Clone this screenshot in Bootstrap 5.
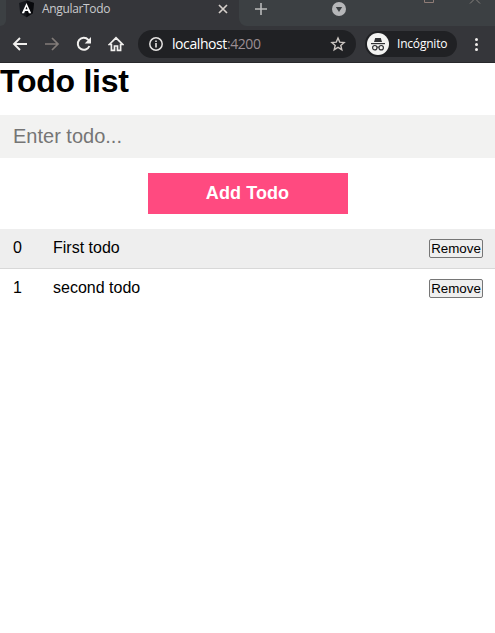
<!DOCTYPE html>
<html lang="en">
<head>
<meta charset="utf-8">
<meta name="viewport" content="width=device-width, initial-scale=1">
<title>AngularTodo</title>
<link href="https://cdn.jsdelivr.net/npm/bootstrap@5.3.0/dist/css/bootstrap.min.css" rel="stylesheet">
<style>
body{font-family:"Liberation Sans",Arial,sans-serif;color:#000;line-height:1.15;overflow:hidden}
svg{display:block;flex:none}
.browser{height:63px;background:#35363a;border-bottom:1px solid #28282b;font-family:"Open Sans","Noto Sans",sans-serif}
.tabstrip{height:26px;background:#3c4043}
.prev-tab{width:6px;background:#35363a;flex:none}
.prev-tab span{display:block;width:6px;height:26px;background:#3c4043;border-bottom-right-radius:8px}
.active-tab{width:233px;background:#35363a;padding-left:12px;padding-right:10px;height:26px;padding-bottom:8px}
.tab-title{font-size:12px;letter-spacing:-.34px;color:#c9cacd;margin-left:7px;line-height:18px}
.strip-rest{background:#35363a}
.strip-inner{height:26px;background:#3c4043;border-bottom-left-radius:8px;padding-left:16px;padding-bottom:8px}
.drop{margin-left:65px}
.win-max{margin-left:78px;align-self:flex-start}
.win-close{margin-left:35px;align-self:flex-start}
.toolbar{height:36px}
.nav-icons{width:138px;padding-left:12px;gap:16px}
.omnibox{width:218px;height:28px;background:#202124;border-radius:14px;padding-left:10px;padding-right:10px;margin-right:9px}
.url{font-size:14px;letter-spacing:-.42px;color:#fff;margin-left:8px;line-height:28px}
.url span{color:#9b8e92}
.incog{width:92px;height:26px;background:#202124;border-radius:13px;padding-left:2px;margin-right:12px}
.incog-label{font-size:12px;color:#fff;margin-left:8px;letter-spacing:-.2px;line-height:26px}
.page-title{font-size:32px;font-weight:700;line-height:37px;margin-bottom:15px;letter-spacing:-.25px}
.todo-input{height:43px;border:0;border-radius:0;background:#f2f2f1;padding:0 13px;font-size:20px;color:#000}
.todo-input::placeholder{color:#757575;opacity:1}
.add-btn{width:200px;height:41px;margin:15px auto;background:#ff4a80;border:0;border-radius:0;color:#fff;font-weight:700;font-size:18px;letter-spacing:.1px;padding:0;line-height:41px}
.add-btn:hover{background:#ff4a80;color:#fff}
.todo-row{height:40px;border:0;border-radius:0!important;padding:0 12px 2px 13px;font-size:16px;color:#000;background:#fff}
.todo-row.shade{background:#eee;border-bottom:1px solid #d8d8d8;padding-bottom:1px}
.idx{width:40px}
.remove-btn{width:54px;height:19px;font-size:13.333px;line-height:17px;padding:0;border:1px solid #767676;border-radius:2px;background:#efefef;color:#000}
</style>
</head>
<body class="bg-white">
<header class="browser">
  <div class="tabstrip d-flex">
    <div class="prev-tab"><span></span></div>
    <div class="active-tab d-flex align-items-center">
      <svg width="17" height="18" viewBox="0 0 17 18"><path fill="#17191e" d="M8.500.5 16 3l-1.200 10.200L8.500 17.300 2.200 13.200 1 3z"/><path fill="#08090c" d="M8.500.5 16 3l-1.200 10.200-6.300 4.100z"/><path fill="#fff" fill-rule="evenodd" d="m8.500 3 4.700 10.300h-2.300L10 11H7l-.9 2.300H3.800zM8.500 6.600 7.500 9.200h2z"/></svg>
      <span class="tab-title">AngularTodo</span>
      <svg class="ms-auto" width="12" height="12" viewBox="0 0 12 12"><path d="m2 2 8 8M10 2l-8 8" stroke="#d5cfca" stroke-width="1.700"/></svg>
    </div>
    <div class="strip-rest flex-grow-1">
      <div class="strip-inner d-flex align-items-center">
        <svg width="12" height="12" viewBox="0 0 12 12"><path d="M6 0v12M0 6h12" stroke="#b9babb" stroke-width="1.600"/></svg>
        <svg class="drop" width="14" height="14" viewBox="0 0 14 14"><circle cx="7" cy="7" r="7" fill="#b6b7b9"/><path d="M3.800 5h6.400L7 10z" fill="#3c4043"/></svg>
        <svg class="win-max" width="10" height="3" viewBox="0 0 10 3"><path d="M.5 0v2.500h9V0" fill="none" stroke="#8f7c76"/></svg>
        <svg class="win-close" width="12" height="4" viewBox="0 0 12 4"><path d="M1 3.500 5.500-1M11 3.500 6.500-1" stroke="#85817e"/></svg>
      </div>
    </div>
  </div>
  <div class="toolbar d-flex align-items-center">
    <div class="nav-icons d-flex align-items-center flex-shrink-0">
      <svg width="16" height="16" viewBox="0 0 16 16"><path d="M15 8H2.500M8 2 2 8l6 6" fill="none" stroke="#f1f0ee" stroke-width="1.900"/></svg>
      <svg width="16" height="16" viewBox="0 0 16 16"><path d="M1 8h12.500M8 2l6 6-6 6" fill="none" stroke="#827c79" stroke-width="1.700"/></svg>
      <svg width="16" height="16" viewBox="0 0 16 16"><path d="M13.400 10A6 6 0 1 1 12.300 3.800L14 5.500" fill="none" stroke="#f1f0ee" stroke-width="2"/><path d="M15 1v6.500H8.700z" fill="#f1f0ee"/></svg>
      <svg width="16" height="16" viewBox="0 0 16 16"><path d="M1.300 8.500 8 1.800l6.700 6.700H12.600V14.300H9.500V10h-3v4.300H3.400V8.500z" fill="none" stroke="#f1f0ee" stroke-width="1.700"/></svg>
    </div>
    <div class="omnibox d-flex align-items-center flex-shrink-0">
      <svg width="16" height="16" viewBox="0 0 16 16"><circle cx="8" cy="8" r="6.200" fill="none" stroke="#e5e3e2" stroke-width="1.500"/><path d="M8 7.100v4.300M8 4.500v1.600" stroke="#e5e3e2" stroke-width="1.600"/></svg>
      <span class="url">localhost<span>:4200</span></span>
      <svg class="ms-auto" width="16" height="16" viewBox="0 0 16 16"><path d="m8 2 1.700 4.100 4.400.4-3.300 2.900 1 4.300L8 11.400l-3.800 2.300 1-4.300-3.300-2.900 4.400-.4z" fill="none" stroke="#ccc6c2" stroke-width="1.400"/></svg>
    </div>
    <div class="incog d-flex align-items-center flex-shrink-0">
      <svg width="22" height="22" viewBox="0 0 22 22"><circle cx="11" cy="11" r="11" fill="#f3f3f2"/><path d="M7 9 8.200 5h5.600L15 9z" fill="#303134"/><path d="M4 10.600h14" stroke="#303134" stroke-width="1.200"/><circle cx="7.800" cy="14.700" r="2.200" fill="none" stroke="#303134" stroke-width="1.200"/><circle cx="14.200" cy="14.700" r="2.200" fill="none" stroke="#303134" stroke-width="1.200"/><path d="M10 14.300q1-.6 2 0" fill="none" stroke="#303134"/></svg>
      <span class="incog-label">Incógnito</span>
    </div>
    <svg width="16" height="16" viewBox="0 0 16 16"><g fill="#f1eeec"><circle cx="7.500" cy="3.500" r="1.500"/><circle cx="7.500" cy="8.500" r="1.500"/><circle cx="7.500" cy="13.500" r="1.500"/></g></svg>
  </div>
</header>
<main>
  <h1 class="page-title">Todo list</h1>
  <input class="form-control todo-input" type="text" placeholder="Enter todo...">
  <button class="btn add-btn d-block" type="button">Add Todo</button>
  <div class="list-group">
    <div class="list-group-item todo-row shade d-flex align-items-center"><span class="idx">0</span><span>First todo</span><button class="remove-btn ms-auto" type="button">Remove</button></div>
    <div class="list-group-item todo-row d-flex align-items-center"><span class="idx">1</span><span>second todo</span><button class="remove-btn ms-auto" type="button">Remove</button></div>
  </div>
</main>
<script src="https://cdn.jsdelivr.net/npm/bootstrap@5.3.0/dist/js/bootstrap.bundle.min.js"></script>
</body>
</html>
